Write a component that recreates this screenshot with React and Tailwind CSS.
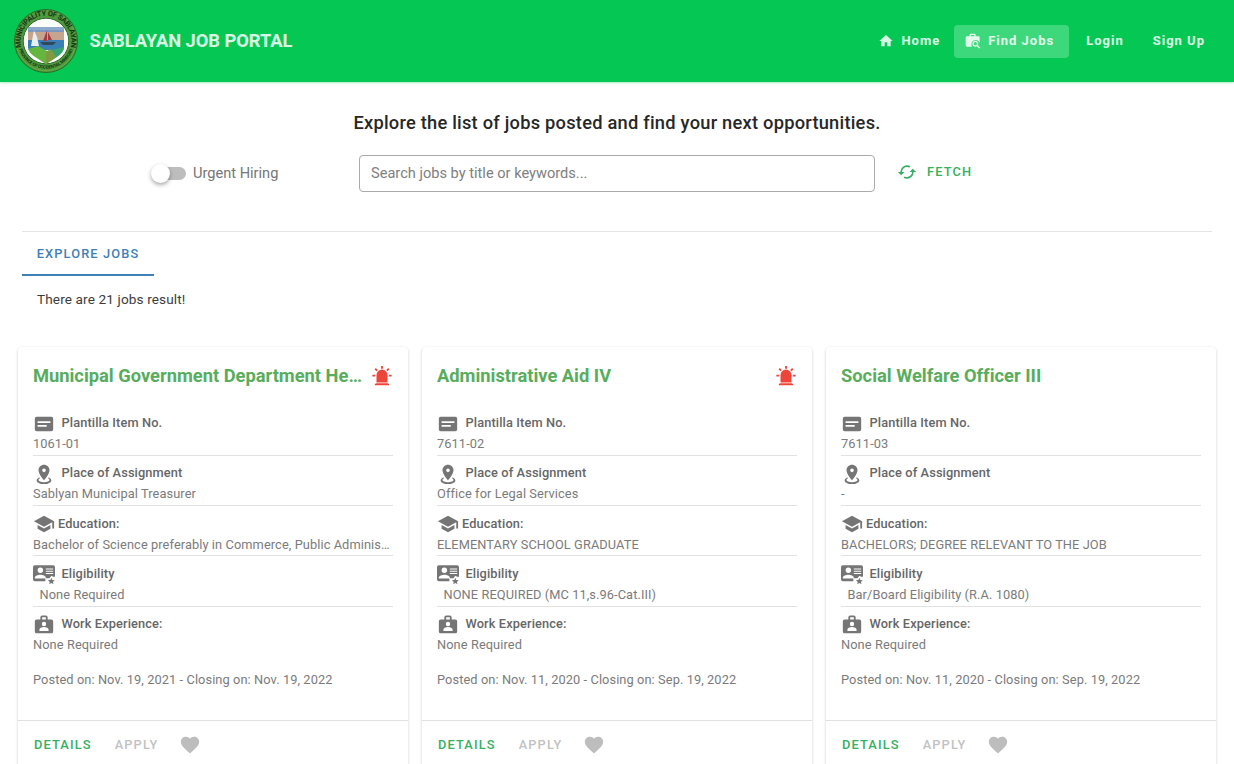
const PATHS = {
  home: 'M10,20V14H14V20H19V12H22L12,3L2,12H5V20H10Z',
  briefcaseSearch:
    'M15.5,11.5C18,11.5 20,13.5 20,16C20,16.9 19.75,17.7 19.31,18.4L22.9,22L21.5,23.4L17.88,19.82C17.19,20.25 16.37,20.5 15.5,20.5C13,20.5 11,18.5 11,16C11,13.5 13,11.5 15.5,11.5M15.5,13.5A2.5,2.5 0 0,0 13,16A2.5,2.5 0 0,0 15.5,18.5A2.5,2.5 0 0,0 18,16A2.5,2.5 0 0,0 15.5,13.5M9,1H14A2,2 0 0,1 16,3V5H20A2,2 0 0,1 22,7V14.5A6.5,6.5 0 1,0 10.5,20.5H3A2,2 0 0,1 1,18.5V7A2,2 0 0,1 3,5H7V3A2,2 0 0,1 9,1M14,5V3H9V5H14Z',
  cached:
    'M19,8L15,12H18A6,6 0 0,1 12,18C11,18 10.03,17.75 9.2,17.3L7.74,18.76C8.97,19.54 10.43,20 12,20A8,8 0 0,0 20,12H23M6,12A6,6 0 0,1 12,6C13,6 13.97,6.25 14.8,6.7L16.26,5.24C15.03,4.46 13.57,4 12,4A8,8 0 0,0 4,12H1L5,16L9,12',
  cardText:
    'M20,4H4A2,2 0 0,0 2,6V18A2,2 0 0,0 4,20H20A2,2 0 0,0 22,18V6A2,2 0 0,0 20,4M5,9H19V11H5V9M5,13H15V15H5V13Z',
  marker:
    'M12,2C15.31,2 18,4.66 18,7.95C18,12.41 12,19 12,19S6,12.41 6,7.95C6,4.66 8.69,2 12,2M12,6A2,2 0 0,0 10,8A2,2 0 0,0 12,10A2,2 0 0,0 14,8A2,2 0 0,0 12,6M20,19C20,21.21 16.42,23 12,23C7.58,23 4,21.21 4,19C4,17.71 5.22,16.56 7.11,15.83L7.75,16.74C6.67,17.19 6,17.81 6,18.5C6,19.88 8.69,21 12,21C15.31,21 18,19.88 18,18.5C18,17.81 17.33,17.19 16.25,16.74L16.89,15.83C18.78,16.56 20,17.71 20,19Z',
  school:
    'M12,3L1,9L12,15L21,10.09V17H23V9M5,13.18V17.18L12,21L19,17.18V13.18L12,17L5,13.18Z',
  cardStar:
    'M22,2.5H2A2,2 0 0,0 0,4.5V18A2,2 0 0,0 2,20H13.5V17H2V16C2,14 5.5,12.8 8,12.8S14,14 14,16V16.5H18L20,14L22,15H24V4.5A2,2 0 0,0 22,2.5M8,5A3,3 0 1,1 8,11A3,3 0 0,1 8,5M22,12H14V11H22V12M22,9.5H14V8.5H22V9.5M22,7H14V6H22V7M20,16L21,18.6L23.8,18.8L21.7,20.6L22.4,23.3L20,21.8L17.6,23.3L18.3,20.6L16.2,18.8L19,18.6Z',
  briefcaseAccount:
    'M10,1.5H14A2,2 0 0,1 16,3.5V6H20A2,2 0 0,1 22,8V19A2,2 0 0,1 20,21H4A2,2 0 0,1 2,19V8A2,2 0 0,1 4,6H8V3.5A2,2 0 0,1 10,1.5M14,6V3.5H10V6H14M12,8.5A2.4,2.4 0 1,0 12,13.3A2.4,2.4 0 1,0 12,8.5M7,18.5H17V17C17,15.3 14.5,14.3 12,14.3S7,15.3 7,17V18.5Z',
  heart:
    'M12,21.35L10.55,20.03C5.4,15.36 2,12.27 2,8.5C2,5.41 4.42,3 7.5,3C9.24,3 10.91,3.81 12,5.08C13.09,3.81 14.76,3 16.5,3C19.58,3 22,5.41 22,8.5C22,12.27 18.6,15.36 13.45,20.03L12,21.35Z',
  alarm:
    'M6,6.9L3.87,4.78L5.28,3.37L7.4,5.5L6,6.9M13,1V4H11V1H13M20.13,4.78L18,6.9L16.6,5.5L18.72,3.37L20.13,4.78M4.5,10.5V12.5H1.5V10.5H4.5M19.5,10.5H22.5V12.5H19.5V10.5M6,20H18A2,2 0 0,1 20,22H4A2,2 0 0,1 6,20M12,5A6,6 0 0,1 18,11V19H6V11A6,6 0 0,1 12,5Z',
};

function Icon({ name, className }) {
  return (
    <svg viewBox="0 0 24 24" className={`shrink-0 overflow-visible fill-current ${className}`}>
      <path d={PATHS[name]} fillRule="evenodd" />
    </svg>
  );
}

function Seal() {
  return (
    <svg viewBox="0 0 64 64" className="size-16 shrink-0">
      <defs>
        <path id="sealTop" d="M 7.4 38 A 25.3 25.3 0 1 1 56.6 38" />
        <path id="sealBottom" d="M 4.5 38 A 28.3 28.3 0 0 0 59.5 38" />
        <clipPath id="shield">
          <path d="M14 18H50V38C50 46 40 49 32 55C24 49 14 46 14 38Z" />
        </clipPath>
      </defs>
      <circle cx="32" cy="32" r="31.5" fill="#4e9a3c" stroke="#2c6b2c" />
      <circle cx="32" cy="32" r="29.8" fill="none" stroke="#7fae48" strokeWidth=".6" />
      <circle cx="32" cy="32" r="22.8" fill="#fbfdf9" stroke="#2f6b2b" strokeWidth="1" />
      <g clipPath="url(#shield)">
        <rect x="14" y="18" width="36" height="8" fill="#8fa9cb" />
        <rect x="14" y="23" width="36" height="9" fill="#c5a58f" />
        <rect x="14" y="31" width="36" height="10" fill="#397fb5" />
        <path d="M14 40L24 37L33 42L33 56H14Z" fill="#65b63f" />
        <path d="M33 42L50 38V56H33Z" fill="#37a274" />
        <path d="M32 43L37 40L43 49L32 56Z" fill="#7f9a3f" />
        <path d="M17 37L20 21L23 28L25 37Z" fill="#e7eff0" />
        <path d="M33 21V32H29ZM34 23L38 31H34Z" fill="#a43c43" />
        <path d="M26 33H42L39 36H29Z" fill="#31475b" />
        <path d="M14 22H50" stroke="#5b7fb0" strokeWidth=".8" />
      </g>
      <g fill="#173617" fontFamily="Roboto, sans-serif" fontWeight="700">
        <text fontSize="7.4">
          <textPath href="#sealTop" startOffset="50%" textAnchor="middle" textLength="92">MUNICIPALITY OF SABLAYAN</textPath>
        </text>
        <text fontSize="4.4">
          <textPath href="#sealBottom" startOffset="50%" textAnchor="middle" textLength="70">PROVINCE OF OCCIDENTAL MINDORO</textPath>
        </text>
      </g>
    </svg>
  );
}

const JOBS = [
  {
    title: 'Municipal Government Department Head I', urgent: true, item: '1061-01', place: 'Sablyan Municipal Treasurer',
    education: 'Bachelor of Science preferably in Commerce, Public Administration',
    eligibility: 'None Required', dates: 'Posted on: Nov. 19, 2021 - Closing on: Nov. 19, 2022',
  },
  {
    title: 'Administrative Aid IV', urgent: true, item: '7611-02', place: 'Office for Legal Services',
    education: 'ELEMENTARY SCHOOL GRADUATE', eligibility: 'NONE REQUIRED (MC 11,s.96-Cat.III)',
    dates: 'Posted on: Nov. 11, 2020 - Closing on: Sep. 19, 2022',
  },
  {
    title: 'Social Welfare Officer III', urgent: false, item: '7611-03', place: '-',
    education: 'BACHELORS; DEGREE RELEVANT TO THE JOB', eligibility: 'Bar/Board Eligibility (R.A. 1080)',
    dates: 'Posted on: Nov. 11, 2020 - Closing on: Sep. 19, 2022',
  },
];

function Field({ icon, label, value, tight, indent, last }) {
  return (
    <div className={`flex h-[50.3px] flex-col pt-[7px] ${last ? '' : 'border-b border-[#e2e2e2]'}`}>
      <div className={`flex h-[22px] items-center font-medium tracking-[0.12px] text-[#666] ${tight ? 'gap-[3px]' : 'gap-[6.5px]'}`}>
        <Icon name={icon} className="size-[22px] text-[#757575]" />
        <span className="relative -top-px">{label}</span>
      </div>
      <div className={`-mt-[0.6px] h-5 truncate leading-5 ${indent ? 'pl-[6.5px]' : ''}`}>{value}</div>
    </div>
  );
}

function JobCard({ job }) {
  return (
    <article className="flex h-[440px] min-w-0 flex-col rounded bg-white text-[12.8px] tracking-[0.09px] text-[#7b7b7b] shadow-[0_1px_3px_rgba(0,0,0,0.2)]">
      <div className="flex h-[373px] flex-col px-[15px]">
        <div className="flex h-[58.5px] items-center justify-between pb-[1px]">
          <h2 className="truncate text-[18.3px] font-bold tracking-[0.01px] text-[#58ad5c]">{job.title}</h2>
          {job.urgent && <Icon name="alarm" className="ml-2 size-[22px] text-[#ee453a]" />}
        </div>
        <div>
          <Field icon="cardText" label="Plantilla Item No." value={job.item} />
          <Field icon="marker" label="Place of Assignment" value={job.place} />
          <Field icon="school" label="Education:" value={job.education} tight />
          <Field icon="cardStar" label="Eligibility" value={job.eligibility} indent />
          <Field icon="briefcaseAccount" label="Work Experience:" value="None Required" last />
        </div>
        <p className="mt-[13.5px] leading-5">{job.dates}</p>
      </div>
      <footer className="flex h-12 items-center border-t border-[#e0e0e0] px-4 font-medium tracking-[1.14px]">
        <button className="text-[#35b060]">DETAILS</button>
        <button className="ml-[23px] text-[#c2c2c2]">APPLY</button>
        <Icon name="heart" className="ml-[21px] size-[22px] text-[#bdbdbd]" />
      </footer>
    </article>
  );
}

export default function App() {
  return (
    <div className="flex h-[764px] w-[1234px] flex-col overflow-hidden bg-white font-[Roboto,sans-serif] text-[#272727]">
      <header className="flex h-[82px] shrink-0 items-center bg-[#04c853] pr-[29px] pl-[14px] text-white/85 shadow-[0_1px_2px_rgba(0,200,83,0.35)]">
        <Seal />
        <h1 className="ml-[11.5px] text-[18.3px] font-bold tracking-[-0.02px]">SABLAYAN JOB PORTAL</h1>
        <nav className="ml-auto flex items-center text-[13px] font-bold tracking-[1px]">
          <a className="flex items-center gap-[7px]"><Icon name="home" className="size-4" />Home</a>
          <a className="ml-[14px] flex h-[33px] w-[115px] items-center gap-[7px] rounded bg-[#3dd87b] pl-[11px]"><Icon name="briefcaseSearch" className="size-4" />Find Jobs</a>
          <a className="ml-[17px]">Login</a>
          <a className="ml-[29px]">Sign Up</a>
        </nav>
      </header>

      <section className="flex h-[149px] shrink-0 flex-col">
        <p className="mt-[29px] text-center text-[18.3px] leading-6 font-medium tracking-[0.23px]">
          Explore the list of jobs posted and find your next opportunities.
        </p>
        <div className="mt-5 flex h-[37px] items-center pl-[151px]">
          <div className="flex w-[35px] items-center">
            <span className="z-10 size-[19px] shrink-0 rounded-full bg-white shadow-[0_2px_4px_rgba(0,0,0,0.35)]" />
            <span className="-ml-[15px] h-[13px] w-[31px] shrink-0 rounded-full bg-[#bdbdbd]" />
          </div>
          <span className="ml-[7px] w-[166px] text-[14.6px] text-[#767676]">Urgent Hiring</span>
          <input
            className="h-[37px] w-[516px] rounded border border-[#aaa] px-[11px] pb-[2px] text-[14.6px] outline-none placeholder:text-[#808080]"
            placeholder="Search jobs by title or keywords..."
          />
          <button className="-mt-[3px] ml-[22px] flex items-center gap-[10px] text-[12.8px] font-medium tracking-[1.14px] text-[#35b060]">
            <Icon name="cached" className="size-5" />FETCH
          </button>
        </div>
      </section>

      <section className="mx-[22px] flex h-[116px] shrink-0 flex-col border-t border-[#e4e4e4]">
        <div className="flex h-[44px] w-[132px] items-center justify-center border-b-2 border-[#3f7fb5] pt-[2px] text-[12.8px] font-medium tracking-[1.14px] text-[#3f7fb5]">EXPLORE JOBS</div>
        <p className="mt-[13px] pl-[15px] text-[13.6px] leading-5 tracking-[0.12px] text-[#3c3c3c]">There are 21 jobs result!</p>
      </section>

      <main className="grid grid-cols-3 gap-[14px] px-[18px]">
        {JOBS.map((job) => <JobCard key={job.item} job={job} />)}
      </main>
    </div>
  );
}
